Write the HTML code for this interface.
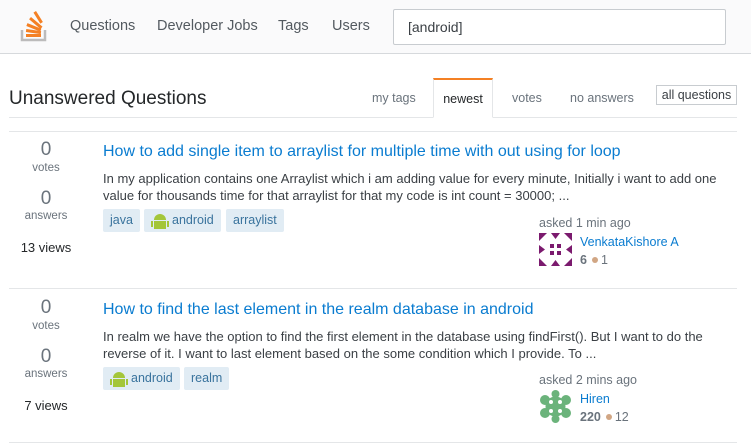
<!DOCTYPE html>
<html><head><meta charset="utf-8"><style>
*{box-sizing:border-box;margin:0;padding:0}
body{width:751px;height:447px;overflow:hidden;background:#fff;font-family:"Liberation Sans",Arial,sans-serif;color:#242729;position:relative}
.hdr{position:absolute;left:0;top:0;width:751px;height:54px;background:#fafafb;border-bottom:1px solid #d6d9dc}
.nav{position:absolute;top:18px;font-size:14.5px;color:#535a60}
.search{position:absolute;left:393px;top:9px;width:333px;height:36px;border:1px solid #c8ccd0;background:#fff;border-radius:2px;font-size:14px;color:#3b4045;padding:9px 14px}
h1{position:absolute;left:9px;top:88px;font-size:19px;font-weight:normal;color:#242729}
.tabline{position:absolute;left:9px;top:117px;width:728px;height:1px;background:#e4e6e8}
.tab{position:absolute;top:91px;font-size:12.5px;color:#6a737c}
.newest{position:absolute;left:433px;top:78px;width:60px;height:40px;border:1px solid #e4e6e8;border-top:2px solid #f48024;border-bottom:1px solid #fff;background:#fff;font-size:12.5px;color:#242729;text-align:center;padding-top:12px}
.allq{position:absolute;left:656px;top:85px;width:81px;height:20px;border:1px solid #c8ccd0;font-size:12.5px;color:#3b4045;text-align:center;padding-top:2px}
.sep{position:absolute;left:9px;width:728px;height:1px;background:#e4e6e8}
.num{position:absolute;width:76px;left:8px;text-align:center;font-size:19px;color:#6a737c}
.lbl{position:absolute;width:76px;left:8px;text-align:center;font-size:11.5px;color:#6a737c}
.views{position:absolute;width:76px;left:8px;text-align:center;font-size:13px;color:#242729}
.qt{position:absolute;left:103px;font-size:16px;color:#0a7cd0}
.ex{position:absolute;left:103px;width:630px;font-size:13px;line-height:17px;color:#3b4045}
.tag{position:absolute;height:23px;background:#e1ecf4;color:#39739d;font-size:12.5px;padding:4px 7px;border-radius:2px}
.asked{position:absolute;left:539px;font-size:12.5px;color:#6a737c}
.user{position:absolute;left:580px;font-size:12.5px;color:#0a7cd0}
.rep{position:absolute;left:580px;font-size:12.5px;color:#6a737c}
.rep b{color:#6a737c}
.dot{display:inline-block;width:6px;height:6px;border-radius:3px;background:#d1a684;margin:0 3px 1px 5px}
</style></head><body>
<div class="hdr">
<svg style="position:absolute;left:20px;top:10px" width="28" height="32" viewBox="0 0 28 32">
<path d="M2 20v10h23V20" fill="none" stroke="#bcbbbb" stroke-width="2.5"/>
<g fill="#f48024"><rect x="6" y="24" width="15" height="3"/><rect x="6.3" y="19" width="15" height="3" transform="rotate(8 6 19)"/><rect x="7.5" y="13" width="15" height="3" transform="rotate(22 7 13)"/><rect x="11" y="7" width="15" height="3" transform="rotate(40 11 7)"/><rect x="16" y="1" width="13" height="3" transform="rotate(58 16 1)"/></g>
</svg>
<div class="nav" style="left:70px">Questions</div>
<div class="nav" style="left:157px">Developer Jobs</div>
<div class="nav" style="left:278px">Tags</div>
<div class="nav" style="left:332px">Users</div>
<div class="search">[android]</div>
</div>
<h1>Unanswered Questions</h1>
<div class="tabline"></div>
<div class="tab" style="left:372px">my tags</div>
<div class="newest">newest</div>
<div class="tab" style="left:512px">votes</div>
<div class="tab" style="left:570px">no answers</div>
<div class="allq">all questions</div>
<div class="sep" style="top:131px"></div>

<div class="num" style="top:139px">0</div><div class="lbl" style="top:162px">votes</div>
<div class="num" style="top:188px">0</div><div class="lbl" style="top:210px">answers</div>
<div class="views" style="top:240px">13 views</div>
<div class="qt" style="top:143px">How to add single item to arraylist for multiple time with out using for loop</div>
<div class="ex" style="top:170px">In my application contains one Arraylist which i am adding value for every minute, Initially i want to add one value for thousands time for that arraylist for that my code is int count = 30000; ...</div>
<div class="tag" style="left:103px;top:209px">java</div>
<div class="tag" style="left:144px;top:209px;padding-left:28px"><svg style="position:absolute;left:7px;top:3px" width="19" height="17"><path d="M3 8a6 6 0 0 1 12 0z" fill="#a4c639"/><rect x="3" y="9" width="12" height="8" fill="#a4c639"/><rect x="0" y="9" width="2" height="6" fill="#a4c639"/><rect x="16" y="9" width="2" height="6" fill="#a4c639"/></svg>android</div>
<div class="tag" style="left:226px;top:209px">arraylist</div>
<div class="asked" style="top:216px">asked 1 min ago</div>
<svg style="position:absolute;left:539px;top:233px" width="33" height="33"><g fill="#7b1a6e"><rect x="11" y="11" width="4" height="4"/><rect x="18" y="11" width="4" height="4"/><rect x="11" y="18" width="4" height="4"/><rect x="18" y="18" width="4" height="4"/><path d="M0 0h8l-8 8zM33 0v8l-8-8zM0 33v-8l8 8zM33 33h-8l8-8zM12 0h9l-4.5 6zM12 33h9l-4.5-6zM0 12v9l6-4.5zM33 12v9l-6-4.5z"/></g></svg>
<div class="user" style="top:235px">VenkataKishore A</div>
<div class="rep" style="top:253px"><b>6</b><span class="dot"></span>1</div>
<div class="sep" style="top:288px"></div>

<div class="num" style="top:297px">0</div><div class="lbl" style="top:320px">votes</div>
<div class="num" style="top:346px">0</div><div class="lbl" style="top:368px">answers</div>
<div class="views" style="top:398px">7 views</div>
<div class="qt" style="top:301px">How to find the last element in the realm database in android</div>
<div class="ex" style="top:328px">In realm we have the option to find the first element in the database using findFirst(). But I want to do the reverse of it. I want to last element based on the some condition which I provide. To ...</div>
<div class="tag" style="left:103px;top:367px;padding-left:28px"><svg style="position:absolute;left:7px;top:3px" width="19" height="17"><path d="M3 8a6 6 0 0 1 12 0z" fill="#a4c639"/><rect x="3" y="9" width="12" height="8" fill="#a4c639"/><rect x="0" y="9" width="2" height="6" fill="#a4c639"/><rect x="16" y="9" width="2" height="6" fill="#a4c639"/></svg>android</div>
<div class="tag" style="left:184px;top:367px">realm</div>
<div class="asked" style="top:373px">asked 2 mins ago</div>
<svg style="position:absolute;left:539px;top:390px" width="33" height="33"><g fill="#6bb37b"><circle cx="16.5" cy="16.5" r="10"/><circle cx="6" cy="10" r="5"/><circle cx="27" cy="10" r="5"/><circle cx="6" cy="23" r="5"/><circle cx="27" cy="23" r="5"/><circle cx="16.5" cy="4" r="4"/><circle cx="16.5" cy="29" r="4"/></g><g fill="#fff"><circle cx="12" cy="12" r="2"/><circle cx="21" cy="12" r="2"/><circle cx="12" cy="21" r="2"/><circle cx="21" cy="21" r="2"/></g></svg>
<div class="user" style="top:392px">Hiren</div>
<div class="rep" style="top:410px"><b>220</b><span class="dot"></span>12</div>
<div class="sep" style="top:442px"></div>
</body></html>
